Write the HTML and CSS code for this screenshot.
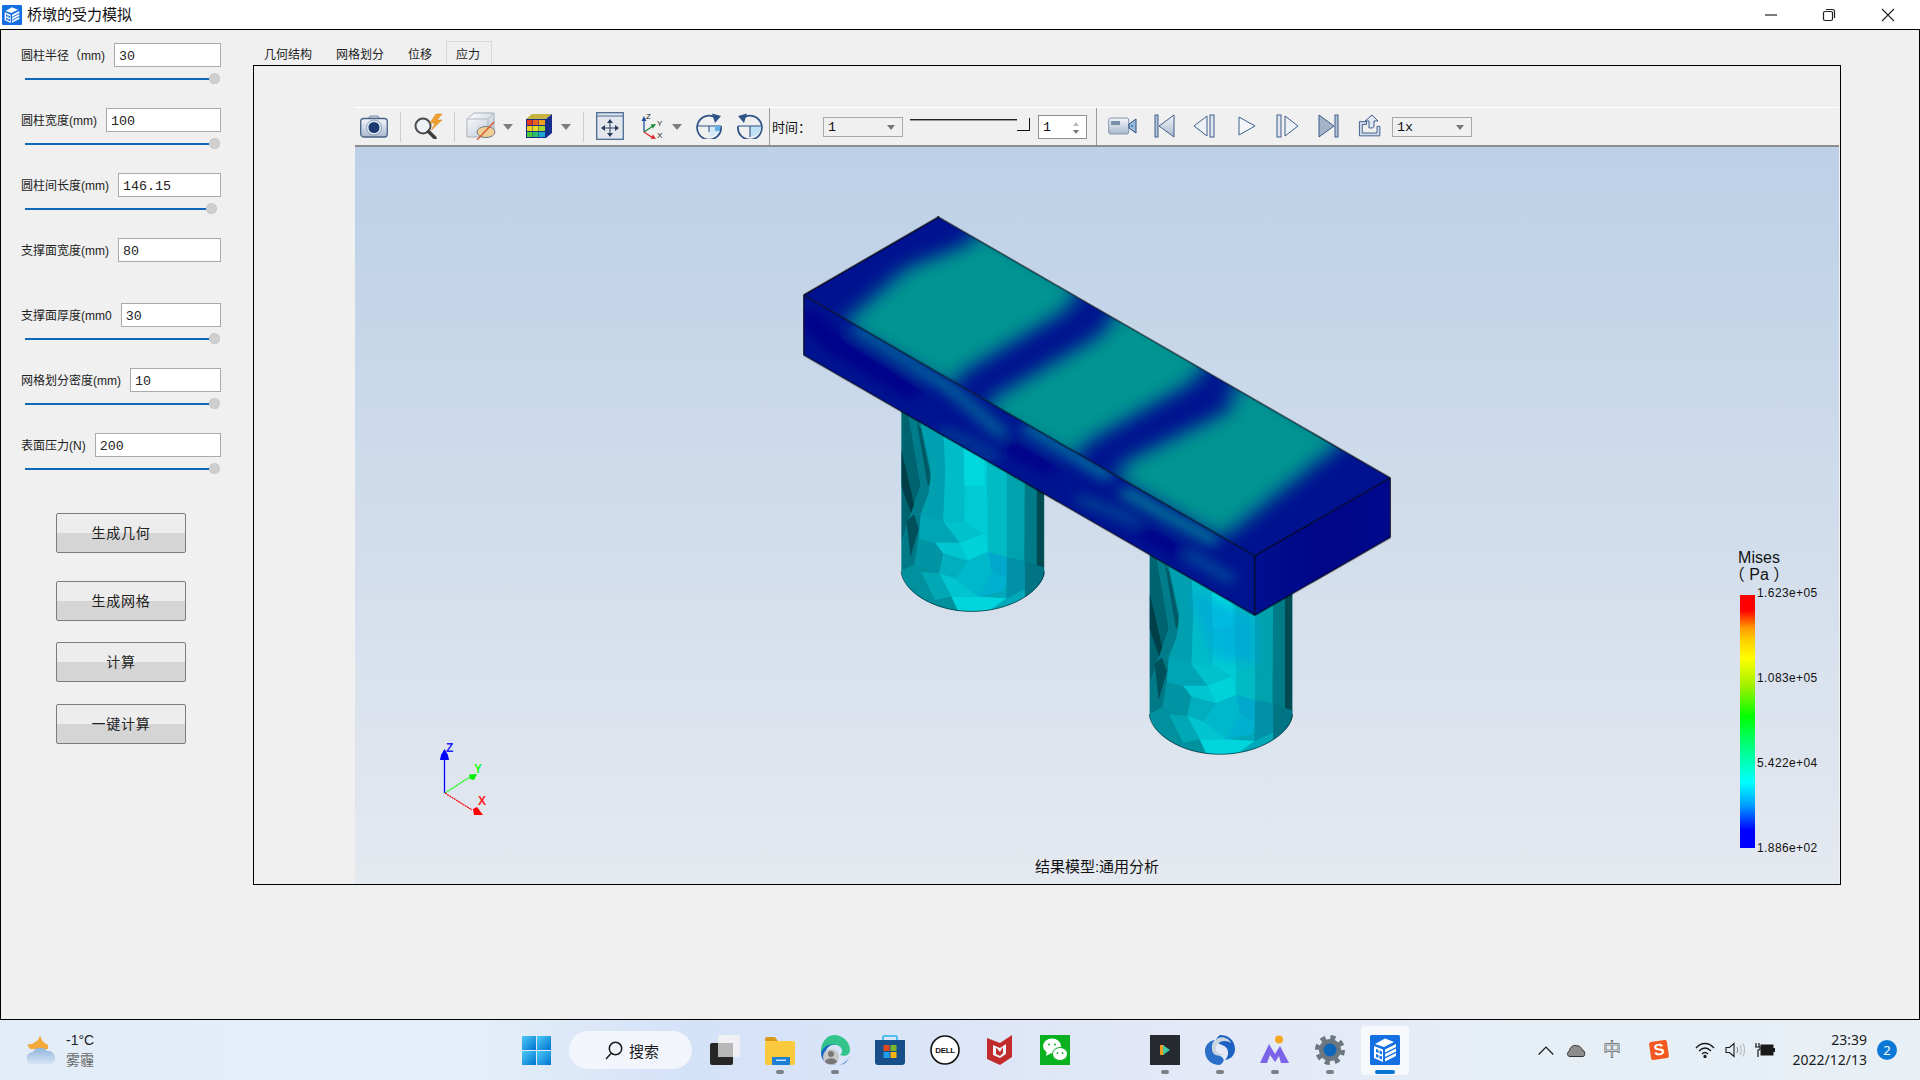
FILE: index.html
```html
<!DOCTYPE html>
<html lang="zh">
<head>
<meta charset="utf-8">
<title>桥墩的受力模拟</title>
<link rel="stylesheet" href="styles.css">
</head>
<body>
<svg class="defs" width="0" height="0" aria-hidden="true">
  <defs>
    <symbol id="appicon" viewBox="0 0 30 30">
      <rect width="30" height="30" rx="1.5" fill="#1470e2"/>
      <path d="M5 9 15 3.500 24 7 14 12Z" fill="#fff"/>
      <path d="M4 11 13 14.500V27L4 23Z" fill="#fff"/>
      <path d="M6 14 8.500 15V18L6 17ZM9.500 15.500 12 16.500V19.500L9.500 18.500ZM6 19 8.500 20V23L6 22ZM9.500 20.500 12 21.500V24.500L9.500 23.500Z" fill="#1470e2"/>
      <path d="M15 14.500 26 9V12L15 17.500ZM15 19 26 13.500V16.500L15 22ZM15 23.500 26 18V21L15 26.500Z" fill="#fff"/>
    </symbol>
    <linearGradient id="steel" x1="0" y1="0" x2="0" y2="1"><stop offset="0" stop-color="#f3f6fa"/><stop offset="1" stop-color="#a9b8cd"/></linearGradient>
    <linearGradient id="pale" x1="0" y1="0" x2="1" y2="1"><stop offset="0" stop-color="#fff"/><stop offset="1" stop-color="#b9c4d2"/></linearGradient>
    <linearGradient id="winblue" x1="0" y1="0" x2="1" y2="1"><stop offset="0" stop-color="#4bcbf8"/><stop offset="1" stop-color="#0272cf"/></linearGradient>
    <linearGradient id="cloud" x1="0" y1="0" x2="0" y2="1"><stop offset="0" stop-color="#8fb4dc"/><stop offset="1" stop-color="#d6e4f4"/></linearGradient>
    <linearGradient id="endface" x1="0" y1="0" x2="1" y2="0"><stop offset="0" stop-color="#001090"/><stop offset=".5" stop-color="#000688"/><stop offset="1" stop-color="#000a8c"/></linearGradient>
    <filter id="blur-large" x="-30%" y="-30%" width="160%" height="160%"><feGaussianBlur stdDeviation="26"/></filter>
    <filter id="blur-small" x="-60%" y="-60%" width="220%" height="220%"><feGaussianBlur stdDeviation="17"/></filter>
    <clipPath id="clip-top"><polygon points="388,48 1495,778 1163,996 58,266"/></clipPath>
    <clipPath id="clip-front"><polygon points="58,266 1163,996 1163,1163 58,434"/></clipPath>
    <clipPath id="clip-cyl"><path d="M297 560H648V1040C645 1090 570 1152 470 1152 370 1152 300 1090 297 1040Z"/></clipPath>
    <g id="cylinder">
      <g clip-path="url(#clip-cyl)" stroke-width="1">
        <rect x="297" y="560" width="351" height="600" fill="#00a8b8"/>
        <rect x="628" y="560" width="20" height="520" fill="#004a52"/>
        <polygon points="600,560 628,560 628,1040 598,1030" fill="#007c88"/>
        <polygon points="555,560 600,560 598,1030 556,1030" fill="#00a2ae"/>
        <polygon points="505,560 555,560 556,1030 510,1000" fill="#00bac4"/>
        <polygon points="440,560 505,560 510,1000 450,940 452,800" fill="#00cbd4"/>
        <polygon points="450,690 500,720 502,800 452,800" fill="#00d8de"/>
        <polygon points="297,580 312,580 330,700 345,800 320,880 297,960" fill="#006470"/>
        <polygon points="297,700 310,760 330,860 322,880 297,800" fill="#003f48"/>
        <polygon points="312,580 340,600 370,760 365,820 345,880 320,880 345,800 330,700" fill="#007c8a"/>
        <polygon points="335,620 345,640 372,790 362,800" fill="#005a66"/>
        <polygon points="340,600 400,650 405,750 400,900 345,880 365,820 370,760" fill="#00a0b0"/>
        <polygon points="400,650 450,690 452,900 400,900 405,750" fill="#00bcc8"/>
        <polygon points="297,960 320,880 345,880 340,950 330,1020 297,1040" fill="#007a86"/>
        <polygon points="310,900 328,880 340,920 320,1000" fill="#00505c"/>
        <polygon points="345,880 400,900 440,960 380,960 340,950" fill="#00a5b5"/>
        <polygon points="400,900 452,900 500,935 440,960" fill="#00c2cc"/>
        <polygon points="340,950 380,960 400,990 390,1045 330,1020" fill="#0094a4"/>
        <polygon points="380,960 440,960 460,1010 400,990" fill="#00c6d2"/>
        <polygon points="440,960 500,935 510,985 460,1010" fill="#00d2da"/>
        <polygon points="400,990 460,1010 430,1060 390,1045" fill="#00aebd"/>
        <polygon points="460,1010 510,985 520,1040 485,1110 430,1060" fill="#00b8cc"/>
        <polygon points="297,1040 330,1020 390,1045 420,1110 440,1152 370,1140 320,1100" fill="#00909e"/>
        <polygon points="345,1040 390,1045 420,1110 380,1120" fill="#00a8b6"/>
        <polygon points="390,1045 430,1060 485,1110 420,1110" fill="#00c4cf"/>
        <polygon points="420,1110 485,1110 555,1115 500,1160 440,1160" fill="#00d4dc"/>
        <polygon points="485,1110 520,1040 555,1060 550,1095" fill="#00b0d0"/>
        <polygon points="510,985 556,1000 555,1060 520,1040" fill="#00a8cc"/>
        <polygon points="556,1000 600,1010 600,1090 555,1115" fill="#0090a8"/>
        <polygon points="600,1010 648,1030 640,1090 600,1130" fill="#007484"/>
      </g>
      <path d="M297 1040C300 1090 370 1152 470 1152 570 1152 645 1090 648 1040" fill="none" stroke="#02343c" stroke-width="2"/>
    </g>
  </defs>
</svg>

<header class="titlebar">
  <svg class="title-icon" width="20" height="20"><use href="#appicon"/></svg>
  <span class="title-text">桥墩的受力模拟</span>
  <div class="win-controls">
    <span class="win-btn"><svg width="14" height="14" viewBox="0 0 14 14"><path d="M1 7H13" stroke="#222" stroke-width="1.200"/></svg></span>
    <span class="win-btn"><svg width="14" height="14" viewBox="0 0 14 14" fill="none" stroke="#222" stroke-width="1.200"><rect x="1.500" y="3.500" width="9" height="9" rx="1.500"/><path d="M4 1.500H10.500A2 2 0 0 1 12.500 3.500V10"/></svg></span>
    <span class="win-btn win-close"><svg width="14" height="14" viewBox="0 0 14 14"><path d="M1 1 13 13M13 1 1 13" stroke="#222" stroke-width="1.100"/></svg></span>
  </div>
</header>

<div class="window">
  <aside class="sidebar">
    <div class="param">
      <div class="field"><label class="field-label">圆柱半径（mm)</label><input class="field-input" value="30"></div>
      <div class="slider"><span class="track"></span><span class="knob"></span></div>
    </div>
    <div class="param">
      <div class="field"><label class="field-label">圆柱宽度(mm)</label><input class="field-input" value="100"></div>
      <div class="slider"><span class="track"></span><span class="knob"></span></div>
    </div>
    <div class="param">
      <div class="field"><label class="field-label">圆柱间长度(mm)</label><input class="field-input" value="146.15"></div>
      <div class="slider"><span class="track track-short"></span><span class="knob"></span></div>
    </div>
    <div class="param">
      <div class="field"><label class="field-label">支撑面宽度(mm)</label><input class="field-input" value="80"></div>
    </div>
    <div class="param">
      <div class="field"><label class="field-label">支撑面厚度(mm0</label><input class="field-input" value="30"></div>
      <div class="slider"><span class="track"></span><span class="knob"></span></div>
    </div>
    <div class="param">
      <div class="field"><label class="field-label">网格划分密度(mm)</label><input class="field-input" value="10"></div>
      <div class="slider"><span class="track"></span><span class="knob"></span></div>
    </div>
    <div class="param">
      <div class="field"><label class="field-label">表面压力(N)</label><input class="field-input" value="200"></div>
      <div class="slider"><span class="track"></span><span class="knob"></span></div>
    </div>
    <div class="actions">
      <button class="action action-first">生成几何</button>
      <button class="action action-wide">生成网格</button>
      <button class="action action-mid">计算</button>
      <button class="action action-mid2">一键计算</button>
    </div>
  </aside>

  <main class="main">
    <nav class="tabs">
      <span class="tab">几何结构</span>
      <span class="tab">网格划分</span>
      <span class="tab">位移</span>
      <span class="tab tab-active">应力</span>
    </nav>
    <section class="frame">
      <div class="toolbar">
        <svg class="tb m5" width="28" height="24" viewBox="0 0 28 24"><path d="M8 5 10 2H18L20 5" fill="#c8d3e2" stroke="#7d90ab"/><rect x=".7" y="4.500" width="26.600" height="18.500" rx="3" fill="url(#steel)" stroke="#4a6286" stroke-width="1.300"/><circle cx="14" cy="13.500" r="7.500" fill="#e5ebf3" stroke="#8aa0bd"/><circle cx="14" cy="13.500" r="5.500" fill="#1b3a70"/></svg>
        <span class="sep m12"></span>
        <svg class="tb m12" width="30" height="26" viewBox="0 0 30 26"><circle cx="10" cy="13" r="7.500" fill="#eef2f7" stroke="#4b4b4b" stroke-width="2"/><path d="M15.500 18.500 22 25" stroke="#3e3e3e" stroke-width="3.500" stroke-linecap="round"/><path d="M23 1 17 10H22L18.500 17 29 7H24L29 1Z" fill="#f0a030" stroke="#d67f10" stroke-width=".5"/></svg>
        <span class="sep m11"></span>
        <svg class="tb m11" width="30" height="28" viewBox="0 0 30 28"><path d="M1 7 8 1H28V19L22 25H1Z" fill="url(#pale)" stroke="#a8b0ba"/><path d="M1 7H22V25M22 7 28 1" fill="none" stroke="#b2b9c3"/><ellipse cx="20" cy="20" rx="9" ry="5.500" fill="#efcf94" stroke="#737b86"/><path d="M11 28 28 10" stroke="#d8562e" stroke-width="1.300"/></svg>
        <span class="caret m7"></span>
        <svg class="tb m12" width="28" height="26" viewBox="0 0 28 26"><path d="M1 6 7 1H27L21 6Z" fill="#c6b340"/><path d="M21 6 27 1V20L21 25Z" fill="#162e8a"/><rect x="1" y="6" width="20" height="19" fill="#162e8a"/><rect x="2" y="7" width="5.500" height="5" fill="#e23a20"/><rect x="8" y="7" width="5.500" height="5" fill="#e8641f"/><rect x="14" y="7" width="6" height="5" fill="#efa021"/><rect x="2" y="13" width="5.500" height="5" fill="#f2d01c"/><rect x="8" y="13" width="5.500" height="5" fill="#e4e024"/><rect x="14" y="13" width="6" height="5" fill="#a4d92c"/><rect x="2" y="19" width="5.500" height="5" fill="#4bca3a"/><rect x="8" y="19" width="5.500" height="5" fill="#26c06a"/><rect x="14" y="19" width="6" height="5" fill="#20a9d0"/></svg>
        <span class="caret m8"></span>
        <span class="sep m12"></span>
        <svg class="tb m12" width="28" height="28" viewBox="0 0 28 28"><rect x=".7" y=".7" width="26.600" height="26.600" fill="#e2e7ee" stroke="#4b6a92" stroke-width="1.300"/><path d="M1 4H27" stroke="#4b6a92"/><path d="M14 7 11 11H17ZM14 25 11 21H17ZM5 16 9 13V19ZM23 16 19 13V19Z" fill="#2b3d59"/><path d="M14 10V22M8 16H20" stroke="#2b3d59"/></svg>
        <svg class="tb m17" width="24" height="26" viewBox="0 0 24 26"><path d="M3 19V6" stroke="#1f4f9e" stroke-width="1.300"/><path d="M3 3 .5 8H5.500Z" fill="#1f4f9e"/><path d="M3 19 12 13" stroke="#1d8a3a" stroke-width="1.300"/><path d="M15 11 9.500 11.500 12 15.500Z" fill="#1d8a3a"/><path d="M3 19 12 25" stroke="#d8262c" stroke-width="1.300"/><path d="M15 26 12 21.500 9.500 25.500Z" fill="#d8262c"/><text x="5" y="6" class="axis-letter">Z</text><text x="16" y="13" class="axis-letter">Y</text><text x="16" y="25" class="axis-letter">X</text></svg>
        <span class="caret m7"></span>
        <svg class="tb m14" width="26" height="26" viewBox="0 0 26 26"><path d="M19.500 4.500A12 12 0 1 0 25 13" fill="none" stroke="#2d5387" stroke-width="1.700"/><path d="M16 .5 25 3 19 10Z" fill="#2d5387"/><path d="M13 13H24.500A12 12 0 0 1 13 24Z" fill="#d7e8f7"/><path d="M1 13H25M13 13V19" stroke="#2d5387" stroke-width="1.100"/><path d="M19 13H24V18H19Z" fill="#62b0e8"/></svg>
        <svg class="tb m15" width="26" height="26" viewBox="0 0 26 26"><path d="M6.500 4.500A12 12 0 1 1 1 13" fill="none" stroke="#2d5387" stroke-width="1.700"/><path d="M10 .5 1 3 7 10Z" fill="#2d5387"/><path d="M13 13H24.500A12 12 0 0 1 13 24Z" fill="#bfe0f6"/><path d="M1 13H25M13 13V24" stroke="#2d5387" stroke-width="1.100"/></svg>
        <span class="sep-strong m6"></span>
        <span class="tb-label m2">时间：</span>
        <span class="combo combo-time">1<i class="combo-arrow"></i></span>
        <span class="time-slider"><span class="time-line"></span><span class="time-handle"></span></span>
        <span class="spin">1<i class="spin-arrows"></i></span>
        <span class="sep-strong sep-media"></span>
        <svg class="tb m11" width="29" height="18" viewBox="0 0 29 18"><rect x=".7" y="1" width="20" height="16" rx="2" fill="url(#steel)" stroke="#8395af"/><rect x="3" y="4" width="9" height="4" fill="#7a8ea9"/><path d="M21 7 28 2V16L21 11Z" fill="#9fbbd8" stroke="#2b4f7a"/><path d="M23 8H25V10H23Z" fill="#2f8ed0"/></svg>
        <svg class="tb m17" width="21" height="24" viewBox="0 0 21 24"><rect x="1" y="1" width="3" height="22" fill="#b6c4d8" stroke="#3f5f8a"/><path d="M20 1V23L5 12Z" fill="url(#steel)" stroke="#3f5f8a"/></svg>
        <svg class="tb m18" width="23" height="24" viewBox="0 0 23 24"><path d="M14 2V22L1 12Z" fill="#eef2f7" stroke="#3f5f8a"/><rect x="17" y="1" width="4" height="22" fill="#dfe6ef" stroke="#3f5f8a"/></svg>
        <svg class="tb m22" width="18" height="24" viewBox="0 0 18 24"><path d="M1 3V21L17 12Z" fill="#f4f6f9" stroke="#3f5f8a"/></svg>
        <svg class="tb m20" width="23" height="24" viewBox="0 0 23 24"><rect x="1" y="1" width="4" height="22" fill="#dfe6ef" stroke="#3f5f8a"/><path d="M9 2V22L22 12Z" fill="#eef2f7" stroke="#3f5f8a"/></svg>
        <svg class="tb m19" width="21" height="24" viewBox="0 0 21 24"><path d="M1 1V23L16 12Z" fill="#a5b4c9" stroke="#3f5f8a"/><rect x="17" y="1" width="3" height="22" fill="#b6c4d8" stroke="#3f5f8a"/></svg>
        <svg class="tb m19" width="23" height="24" viewBox="0 0 23 24"><path d="M1.500 8H9V11H4.500V20H20V13H23V23H1.500Z" fill="#cfdbea" stroke="#3f5f8a" transform="scale(.95)"/><path d="M11 14V7H7L14 1 20 7H16V12C16 14 14 14 11 14Z" fill="#dfe8f3" stroke="#3f5f8a"/></svg>
        <span class="combo combo-speed">1x<i class="combo-arrow"></i></span>
      </div>

      <div class="viewport">
        <svg class="scene" viewBox="355 147 1484 737" width="1484" height="737" aria-hidden="true">
          <g transform="translate(780 200) scale(.40816 .35714)">
            <use href="#cylinder"/>
            <use href="#cylinder" transform="translate(608 400)"/>
            <polygon points="1000,1090 1165,1170 1170,1300 1060,1280" fill="#00a0e0" opacity=".55" filter="url(#blur-small)"/>

            <polygon points="58,266 1163,996 1163,1163 58,434" fill="#001490"/>
            <g clip-path="url(#clip-front)">
              <g fill="none" filter="url(#blur-small)" stroke-linecap="round">
                <polyline points="190,360 300,440 420,530" stroke="#007aa0" stroke-width="30" opacity=".85"/>
                <polyline points="430,540 480,590 540,650" stroke="#00709c" stroke-width="34" opacity=".8"/>
                <polyline points="610,640 700,700 800,770" stroke="#007aa0" stroke-width="34" opacity=".85"/>
                <polyline points="400,650 470,680 520,720" stroke="#00609a" stroke-width="26" opacity=".6"/>
                <polyline points="740,840 830,880 870,900" stroke="#006a9a" stroke-width="26" opacity=".6"/>
                <polyline points="850,820 960,890 1060,950" stroke="#007e98" stroke-width="34" opacity=".9"/>
                <polyline points="1000,990 1100,1060" stroke="#005ea0" stroke-width="30" opacity=".7"/>
                <polyline points="70,330 130,400 320,530" stroke="#00068a" stroke-width="50"/>
                <polyline points="560,690 660,750" stroke="#00068a" stroke-width="36"/>
                <polyline points="890,930 980,985" stroke="#00068a" stroke-width="34"/>
              </g>
            </g>
            <polygon points="388,48 1495,778 1163,996 58,266" fill="#001290"/>
            <g clip-path="url(#clip-top)">
              <g filter="url(#blur-large)" fill="#009592">
                <polygon points="480,70 740,240 700,310 450,480 420,530 150,350 220,280 310,190 470,120"/>
                <polygon points="830,290 1060,440 1010,510 750,680 720,730 500,600 520,555 790,375"/>
                <polygon points="1120,490 1390,670 1320,730 1200,840 1080,950 820,780 850,730 1100,590"/>
              </g>
            </g>
            <polygon points="1495,778 1163,996 1163,1163 1495,945" fill="url(#endface)"/>
            <g fill="none" stroke="#000" stroke-width="2.500" stroke-linejoin="round">
              <path d="M388 48 1495 778V945L1163 1163 58 434V266Z"/>
              <path d="M58 266 1163 996 1495 778M1163 996V1163"/>
              <path d="M58 266 388 48"/>
            </g>
          </g>

          <g class="triad">
            <path d="M444.500 793V760" stroke="#0000ff" stroke-width="1.300"/>
            <path d="M444.500 749 441 755 440 760H449L448 755Z" fill="#0000ff"/>
            <path d="M445 793 470 777" stroke="#00ff00" stroke-width="1.200" stroke-dasharray="2 .6"/>
            <path d="M477 774 469 774.500 470 779 474 780Z" fill="#00ee00"/>
            <path d="M445 793 472 810" stroke="#ff0000" stroke-width="1.200" stroke-dasharray="2 .6"/>
            <path d="M483 815 474 815 473 809 477 807Z" fill="#ff0000"/>
            <text x="446" y="752" class="triad-letter triad-z">Z</text>
            <text x="474" y="773" class="triad-letter triad-y">Y</text>
            <text x="478" y="805" class="triad-letter triad-x">X</text>
          </g>
        </svg>

        <div class="legend">
          <div class="legend-title"><span>Mises</span><span class="legend-unit">（ Pa ）</span></div>
          <div class="legend-scale">
            <div class="legend-bar"></div>
            <div class="legend-labels"><span>1.623e+05</span><span>1.083e+05</span><span>5.422e+04</span><span>1.886e+02</span></div>
          </div>
        </div>
        <div class="caption">结果模型:通用分析</div>
      </div>
    </section>
  </main>
</div>

<footer class="taskbar">
  <div class="weather">
    <svg width="30" height="30" viewBox="0 0 30 30"><path d="M14 0C15 5 18 8 22 10V14H4C3 13 2 11 1.500 9.500 8 9 13 6 14 0Z" fill="#f3a93a"/><path d="M6 29C1 29 0 24 1 21 2 18 5 17 7 17 9 12 18 11 21 16 27 15 30 21 29 25 28 28 26 29 24 29Z" fill="url(#cloud)"/></svg>
    <div class="weather-text"><span class="temp">-1°C</span><span class="cond">雾霾</span></div>
  </div>
  <svg class="start" width="29" height="29" viewBox="0 0 29 29"><rect width="14" height="14" fill="url(#winblue)"/><rect x="15" width="14" height="14" fill="url(#winblue)"/><rect y="15" width="14" height="14" fill="url(#winblue)"/><rect x="15" y="15" width="14" height="14" fill="url(#winblue)"/></svg>
  <div class="search">
    <svg width="18" height="19" viewBox="0 0 18 19" fill="none" stroke="#1a1a1a" stroke-width="1.500"><circle cx="10.500" cy="7.500" r="6.200"/><path d="M6 12.500 1 18"/></svg>
    <span>搜索</span>
  </div>
  <div class="apps">
    <span class="tile"><svg width="30" height="30" viewBox="0 0 30 30"><rect y="8" width="23" height="22" rx="2" fill="#262626"/><rect x="8" y="0" width="22" height="22" rx="1" fill="#f2f2f2" fill-opacity=".85"/><rect x="8" y="8" width="15" height="14" fill="#b8b8b8"/></svg></span>
    <span class="tile tile-open"><svg width="30" height="30" viewBox="0 0 30 30"><path d="M0 4Q0 2 2 2H10L13 6H0Z" fill="#d99a1c"/><rect y="6" width="30" height="24" rx="2" fill="#fbc93d"/><rect x="7" y="22" width="18" height="8" rx="1" fill="#1d7fd4"/><rect x="11" y="24.500" width="10" height="1.500" fill="#bfe0f8"/></svg></span>
    <span class="tile tile-open"><svg width="30" height="30" viewBox="0 0 30 30"><path d="M14 0C23 0 30 7 30 15 30 20 25 22 20 20 24 17 22 11 16 10 9 9 3 13 1 19 0 9 6 0 14 0Z" fill="#33c48c"/><path d="M1 18C3 11 9 8 16 10 12 9 5 12 5 20 5 26 10 30 17 30 8 31 1 26 1 18Z" fill="#1667c4"/><path d="M20 30C25 28 28 25 30 21 27 27 25 29 20 30Z" fill="#1667c4"/><circle cx="11" cy="22" r="8" fill="#c7c7c7"/><circle cx="11" cy="19" r="3" fill="#777"/><path d="M5 27C6 22 16 22 17 27 14 30 8 30 5 27Z" fill="#777"/></svg></span>
    <span class="tile"><svg width="30" height="30" viewBox="0 0 30 30"><path d="M8 6V2Q8 1 9 1H21Q22 1 22 2V6" fill="none" stroke="#26b4e8" stroke-width="1.500"/><path d="M0 5H30V27Q30 30 27 30H3Q0 30 0 27Z" fill="#174f8a"/><rect x="8.500" y="10" width="6" height="6" fill="#e8481f"/><rect x="15.500" y="10" width="6" height="6" fill="#7bb728"/><rect x="8.500" y="17" width="6" height="6" fill="#1f9fe8"/><rect x="15.500" y="17" width="6" height="6" fill="#f8b312"/></svg></span>
    <span class="tile"><svg width="30" height="30" viewBox="0 0 30 30"><circle cx="15" cy="15" r="14" fill="#fff" stroke="#111" stroke-width="1.600"/><text x="15" y="18" class="dell">DELL</text></svg></span>
    <span class="tile"><svg width="30" height="30" viewBox="0 0 30 30"><path d="M2 3 15 8 27 0V22L15 30 2 24Z" fill="#c22b2b"/><path d="M8 10 15 13 21 9V19L15 23 8 20Z" fill="#f0f4fb"/><path d="M11 12.500 15 17 18 12V18L15 21 11 19Z" fill="#c22b2b"/></svg></span>
    <span class="tile"><svg width="30" height="30" viewBox="0 0 30 30"><rect width="30" height="30" fill="#09b120"/><ellipse cx="12" cy="11" rx="9" ry="7.500" fill="#fff"/><path d="M7 16 6 21 11 18Z" fill="#fff"/><ellipse cx="20" cy="19" rx="7.500" ry="6.500" fill="#fff" stroke="#09b120"/><circle cx="9" cy="9.500" r="1" fill="#09b120"/><circle cx="15" cy="9.500" r="1" fill="#09b120"/><circle cx="17.500" cy="18" r=".9" fill="#09b120"/><circle cx="22.500" cy="18" r=".9" fill="#09b120"/></svg></span>
    <span class="tile tile-empty"></span>
    <span class="tile tile-open"><svg width="30" height="30" viewBox="0 0 30 30"><rect width="30" height="30" fill="#262a30"/><path d="M10 10H14V20H10Z" fill="#f09a20"/><path d="M13 10 20 15 13 20Z" fill="#40c8a0"/></svg></span>
    <span class="tile tile-open"><svg width="30" height="30" viewBox="0 0 30 30"><path d="M15 0C24 0 30 6 30 14 30 20 26 24 20 25 25 20 24 12 17 10 12 8 8 5 15 0Z" fill="#1b62c2"/><path d="M15 30C6 30 0 24 0 16 0 10 4 6 10 5 5 10 6 18 13 20 18 22 22 25 15 30Z" fill="#2b6fc8"/><path d="M11 5C14 0 24 2 26 8 22 5 14 5 11 11 9 16 14 20 19 19 15 22 7 21 7 14 7 10 9 7 11 5Z" fill="#c9d4dd"/></svg></span>
    <span class="tile tile-open"><svg width="30" height="30" viewBox="0 0 30 30"><circle cx="19" cy="4.500" r="4" fill="#f7a823"/><path d="M0 28 9 9 15 19 20 11 29 28H21L19 21 15 27 10 20 7 28Z" fill="#7c63e8"/></svg></span>
    <span class="tile tile-open"><svg width="30" height="30" viewBox="0 0 30 30"><circle cx="15" cy="15" r="12.500" fill="none" stroke="#6c7780" stroke-width="5" stroke-dasharray="5 4.820"/><circle cx="15" cy="15" r="11" fill="#6c7780"/><circle cx="15" cy="15" r="6.500" fill="#0e67b8"/></svg></span>
    <span class="tile tile-active"><svg width="30" height="30"><use href="#appicon"/></svg></span>
  </div>
  <div class="tray">
    <svg class="tray-chevron" width="16" height="9" viewBox="0 0 16 9"><path d="M.7 8.500 8 1 15.300 8.500" fill="none" stroke="#1a1a1a" stroke-width="1.200"/></svg>
    <svg class="tray-cloud" width="20" height="13" viewBox="0 0 20 13"><path d="M4 12.500C1 12.500 .5 8.500 3 7.500 4 3 8 0 11 2 13 1 16 4 16 6 19 6 20 12 17 12.500Z" fill="#8d8d8d" stroke="#333"/></svg>
    <span class="tray-ime">中</span>
    <span class="tray-sogou">S</span>
    <svg class="tray-wifi" width="20" height="16" viewBox="0 0 20 16" fill="none" stroke="#1a1a1a" stroke-width="1.300"><path d="M1 6C6 0 14 0 19 6M4 9C8 5 12 5 16 9M7 12C9 10 11 10 13 12"/><circle cx="10" cy="14.500" r="1" fill="#1a1a1a"/></svg>
    <svg class="tray-sound" width="20" height="16" viewBox="0 0 20 16" fill="none" stroke="#1a1a1a" stroke-width="1.100"><path d="M1 5.500H4.500L9 1.500V14.500L4.500 10.500H1Z"/><path d="M12 5C13 7 13 9 12 11" stroke="#888"/><path d="M15 3C16.500 6 16.500 10 15 13M18 1.500C20 5 20 11 18 14.500" stroke="#bbb"/></svg>
    <svg class="tray-battery" width="20" height="16" viewBox="0 0 20 16"><rect x="6" y="3" width="12" height="10" fill="#1a1a1a" stroke="#1a1a1a"/><rect x="18" y="6" width="2" height="4" fill="#1a1a1a"/><path d="M1 1V5M4 1V5M0 5H5V7Q5 8 3 8V15" fill="none" stroke="#1a1a1a" stroke-width="1.200"/></svg>
    <div class="clock"><span>23:39</span><span>2022/12/13</span></div>
    <span class="badge">2</span>
  </div>
</footer>
</body>
</html>
```

FILE: styles.css
```css
* { box-sizing: border-box; }

html, body {
  margin: 0;
  padding: 0;
  width: 1920px;
  height: 1080px;
  overflow: hidden;
}

body {
  display: flex;
  flex-direction: column;
  background: #f0f0f0;
  color: #1c1c1c;
  font-family: "Liberation Sans", "Noto Sans CJK SC", sans-serif;
  font-size: 12px;
}

.defs { position: absolute; }

/* title bar */
.titlebar {
  flex: none;
  display: flex;
  align-items: center;
  height: 29px;
  padding-left: 2px;
  background: #fff;
}
.title-icon { flex: none; }
.title-text { margin-left: 5px; padding-bottom: 2px; font-size: 15px; color: #111; }
.win-controls { display: flex; margin-left: auto; margin-right: 3px; }
.win-btn { display: flex; justify-content: center; width: 58.500px; }
.win-btn svg { display: block; }

/* window body */
.window {
  flex: none;
  display: flex;
  height: 991px;
  border: 1px solid #000;
  background: #f0f0f0;
}

/* parameter column */
.sidebar {
  flex: none;
  width: 252px;
  padding-top: 13px;
}
.param { height: 65px; padding: 0 32px 0 20px; }
.field { display: flex; align-items: center; height: 24px; }
.field-label { flex: none; margin-right: 9px; padding-bottom: 2px; color: #222; white-space: nowrap; }
.field-input {
  flex: 1;
  min-width: 0;
  height: 24px;
  padding: 2px 4px 0;
  border: 1px solid #aaa;
  border-radius: 0;
  background: #fff;
  color: #222;
  font-family: "Liberation Mono", monospace;
  font-size: 13.330px;
  outline: none;
}
.slider { display: flex; align-items: center; height: 11px; margin: 6px 0 0 4px; }
.track { flex: none; width: 184px; height: 2px; background: #0e69b8; }
.track-short { width: 181px; }
.knob { flex: none; width: 11px; height: 11px; border-radius: 50%; background: #cfcfcf; border: 1px dotted #bdbdbd; }

.actions { display: flex; flex-direction: column; padding: 15px 0 0 55px; }
.action {
  width: 130px;
  height: 40px;
  padding: 0 0 2px;
  border: 1px solid #7c7c7c;
  border-radius: 2px;
  background: linear-gradient(#ededed 0 50%, #d5d5d5 50% 100%);
  color: #222;
  font-family: inherit;
  font-size: 14px;
  letter-spacing: .8px;
}
.action-wide { margin-top: 28px; }
.action-mid { margin-top: 21px; }
.action-mid2 { margin-top: 22px; }

/* tabs and frame */
.main { flex: none; display: flex; flex-direction: column; width: 1588px; padding-top: 11px; }
.tabs { display: flex; height: 24px; margin-left: -1px; }
.tab { display: flex; align-items: center; padding: 0 12px; color: #222; }
.tab-active { margin-left: 2px; padding: 0 11px 0 9px; background: #f0f0f0; border: 1px solid #d9d9d9; border-bottom: 0; }
.frame {
  height: 820px;
  padding: 41px 1px 0 101px;
  border: 1px solid #000;
  background: #f0f0f0;
}

/* toolbar */
.toolbar {
  display: flex;
  align-items: center;
  width: 1484px;
  height: 40px;
  border-top: 1px solid #fff;
  border-bottom: 2px solid #8c8c8c;
  background: #f0f0f0;
}
.tb { flex: none; display: block; margin-top: -2px; }
.axis-letter { font: 8px "Liberation Sans", sans-serif; fill: #222; }
.sep { flex: none; width: 1px; height: 30px; background: #ccc; }
.sep-strong { flex: none; width: 1px; height: 37px; background: #9a9a9a; }
.sep-media { margin-left: 9px; }
.caret { flex: none; width: 0; height: 0; border-left: 5px solid transparent; border-right: 5px solid transparent; border-top: 6px solid #7d7d7d; }
.m2 { margin-left: 2px; }
.m5 { margin-left: 5px; }
.m6 { margin-left: 6px; }
.m7 { margin-left: 7px; }
.m8 { margin-left: 8px; }
.m11 { margin-left: 11px; }
.m12 { margin-left: 12px; }
.m14 { margin-left: 14px; }
.m15 { margin-left: 15px; }
.m17 { margin-left: 17px; }
.m18 { margin-left: 18px; }
.m19 { margin-left: 19px; }
.m20 { margin-left: 20px; }
.m22 { margin-left: 22px; }
.tb-label { flex: none; width: 40px; font-size: 13px; color: #111; white-space: nowrap; }
.combo {
  flex: none;
  display: flex;
  align-items: center;
  height: 20px;
  padding: 2px 0 0 4px;
  border: 1px solid #a8a8a8;
  background: #f0f0f0;
  color: #111;
  font-family: "Liberation Mono", monospace;
  font-size: 13.330px;
}
.combo-time { width: 80px; margin-left: 11px; }
.combo-speed { width: 80px; margin-left: 11px; }
.combo-arrow { width: 0; height: 0; margin-left: auto; margin-right: 7px; border-left: 4.500px solid transparent; border-right: 4.500px solid transparent; border-top: 5px solid #777; }
.time-slider { flex: none; position: relative; width: 120px; height: 14px; margin: -3px 0 0 7px; }
.time-line { display: block; width: 108px; height: 2px; margin-top: 1px; background: #222; border-bottom: 1px solid #999; }
.time-handle { position: absolute; right: 0; top: 0; width: 13px; height: 13px; background: #f0f0f0; border-right: 1px solid #111; border-bottom: 1px solid #111; }
.spin {
  flex: none;
  display: flex;
  align-items: center;
  width: 49px;
  height: 24px;
  margin-left: 8px;
  padding: 2px 0 0 4px;
  border: 1px solid #8f8f8f;
  background: #fff;
  color: #111;
  font-family: "Liberation Mono", monospace;
  font-size: 13.330px;
}
.spin-arrows { position: relative; width: 7px; height: 12px; margin-left: auto; margin-right: 6px; }
.spin-arrows::before, .spin-arrows::after { content: ""; position: absolute; left: 0; width: 0; height: 0; border-left: 3.500px solid transparent; border-right: 3.500px solid transparent; }
.spin-arrows::before { top: 0; border-bottom: 4px solid #bbb; }
.spin-arrows::after { bottom: 0; border-top: 4px solid #777; }

/* 3D view */
.viewport {
  position: relative;
  width: 1484px;
  height: 737px;
  background: linear-gradient(#bcd0e7, #e5e9f0);
  overflow: hidden;
}
.scene { display: block; }
.triad-letter { font: bold 12px "Liberation Sans", sans-serif; }
.triad-z { fill: #2020ff; }
.triad-y { fill: #20ff20; }
.triad-x { fill: #ff2020; }

.legend { position: absolute; left: 1383px; top: 404px; width: 110px; }
.legend-title { display: flex; flex-direction: column; align-items: center; width: 42px; margin-top: -2px; font-size: 16px; line-height: 17px; color: #111; }
.legend-unit { white-space: nowrap; }
.legend-scale { display: flex; height: 269px; margin-top: 3px; }
.legend-bar {
  flex: none;
  width: 15px;
  height: 253px;
  margin: 9px 0 0 2px;
  background: linear-gradient(#f00 0 6%, #ff9a00 13%, #ffd000 18%, #ff0 25%, #a0f000 36%, #0f0 48%, #00ff80 60%, #0ff 74%, #00a0ff 83%, #00f 93% 100%);
}
.legend-labels { display: flex; flex-direction: column; justify-content: space-between; margin-left: 2px; font-size: 12px; line-height: 14px; letter-spacing: .4px; color: #111; }

.caption { position: absolute; left: 0; right: 0; bottom: 8px; text-align: center; font-size: 15px; color: #111; }

/* taskbar */
.taskbar {
  flex: none;
  display: flex;
  align-items: center;
  height: 60px;
  background: linear-gradient(90deg, #e2edf8 0, #e4eef8 25%, #d4e2f8 36%, #e2e8f7 60%, #e6eef6 80%, #e8f0f6 100%);
}
.weather { flex: none; display: flex; align-items: center; width: 522px; padding-left: 26px; }
.weather-text { display: flex; flex-direction: column; margin-left: 10px; font-size: 14px; line-height: 20px; }
.temp { color: #222; }
.cond { color: #6a6a6a; }
.start { flex: none; }
.search {
  flex: none;
  display: flex;
  align-items: center;
  width: 123px;
  height: 38px;
  margin-left: 18px;
  padding-left: 36px;
  border-radius: 19px;
  background: #f2f6fc;
  font-size: 15px;
  color: #1a1a1a;
}
.search span { margin-left: 6px; }
.apps { flex: none; display: flex; gap: 25px; margin-left: 18px; }
.tile { position: relative; flex: none; display: block; width: 30px; height: 30px; }
.tile svg { position: relative; display: block; }
.dell { font: bold 8px "Liberation Sans", sans-serif; text-anchor: middle; letter-spacing: -.3px; fill: #111; }
.tile-open::after {
  content: "";
  position: absolute;
  left: 11px;
  bottom: -9px;
  width: 8px;
  height: 4px;
  border-radius: 2px;
  background: #7b8087;
}
.tile-active::before {
  content: "";
  position: absolute;
  inset: -9px -9px -10px -9px;
  border-radius: 4px;
  background: rgba(255, 255, 255, .65);
}
.tile-active::after {
  content: "";
  position: absolute;
  left: 5px;
  bottom: -9px;
  width: 20px;
  height: 4px;
  border-radius: 2px;
  background: #0c75cf;
}
.tray { flex: none; display: flex; align-items: center; margin-left: 138px; }
.tray-cloud { margin-left: 12px; }
.tray-ime { width: 18px; margin-left: 17px; font-size: 18px; line-height: 20px; text-align: center; color: transparent; -webkit-text-stroke: .5px #333; }
.tray-sogou {
  display: flex;
  align-items: center;
  justify-content: center;
  width: 18px;
  height: 18px;
  margin-left: 29px;
  border-radius: 2px;
  background: #f2581f;
  color: #fff;
  font-weight: bold;
  font-size: 16px;
  transform: rotate(-8deg);
}
.tray-wifi { margin-left: 27px; }
.tray-sound { margin-left: 10px; }
.tray-battery { margin-left: 10px; }
.clock { display: flex; flex-direction: column; align-items: flex-end; width: 92px; font-family: "Noto Sans", sans-serif; font-size: 14px; line-height: 20px; color: #1c1c1c; }
.badge {
  display: flex;
  align-items: center;
  justify-content: center;
  width: 20px;
  height: 20px;
  margin-left: 10px;
  border-radius: 50%;
  background: #0a78d4;
  color: #fff;
  font-family: "Noto Sans", sans-serif;
  font-size: 13px;
}
```
